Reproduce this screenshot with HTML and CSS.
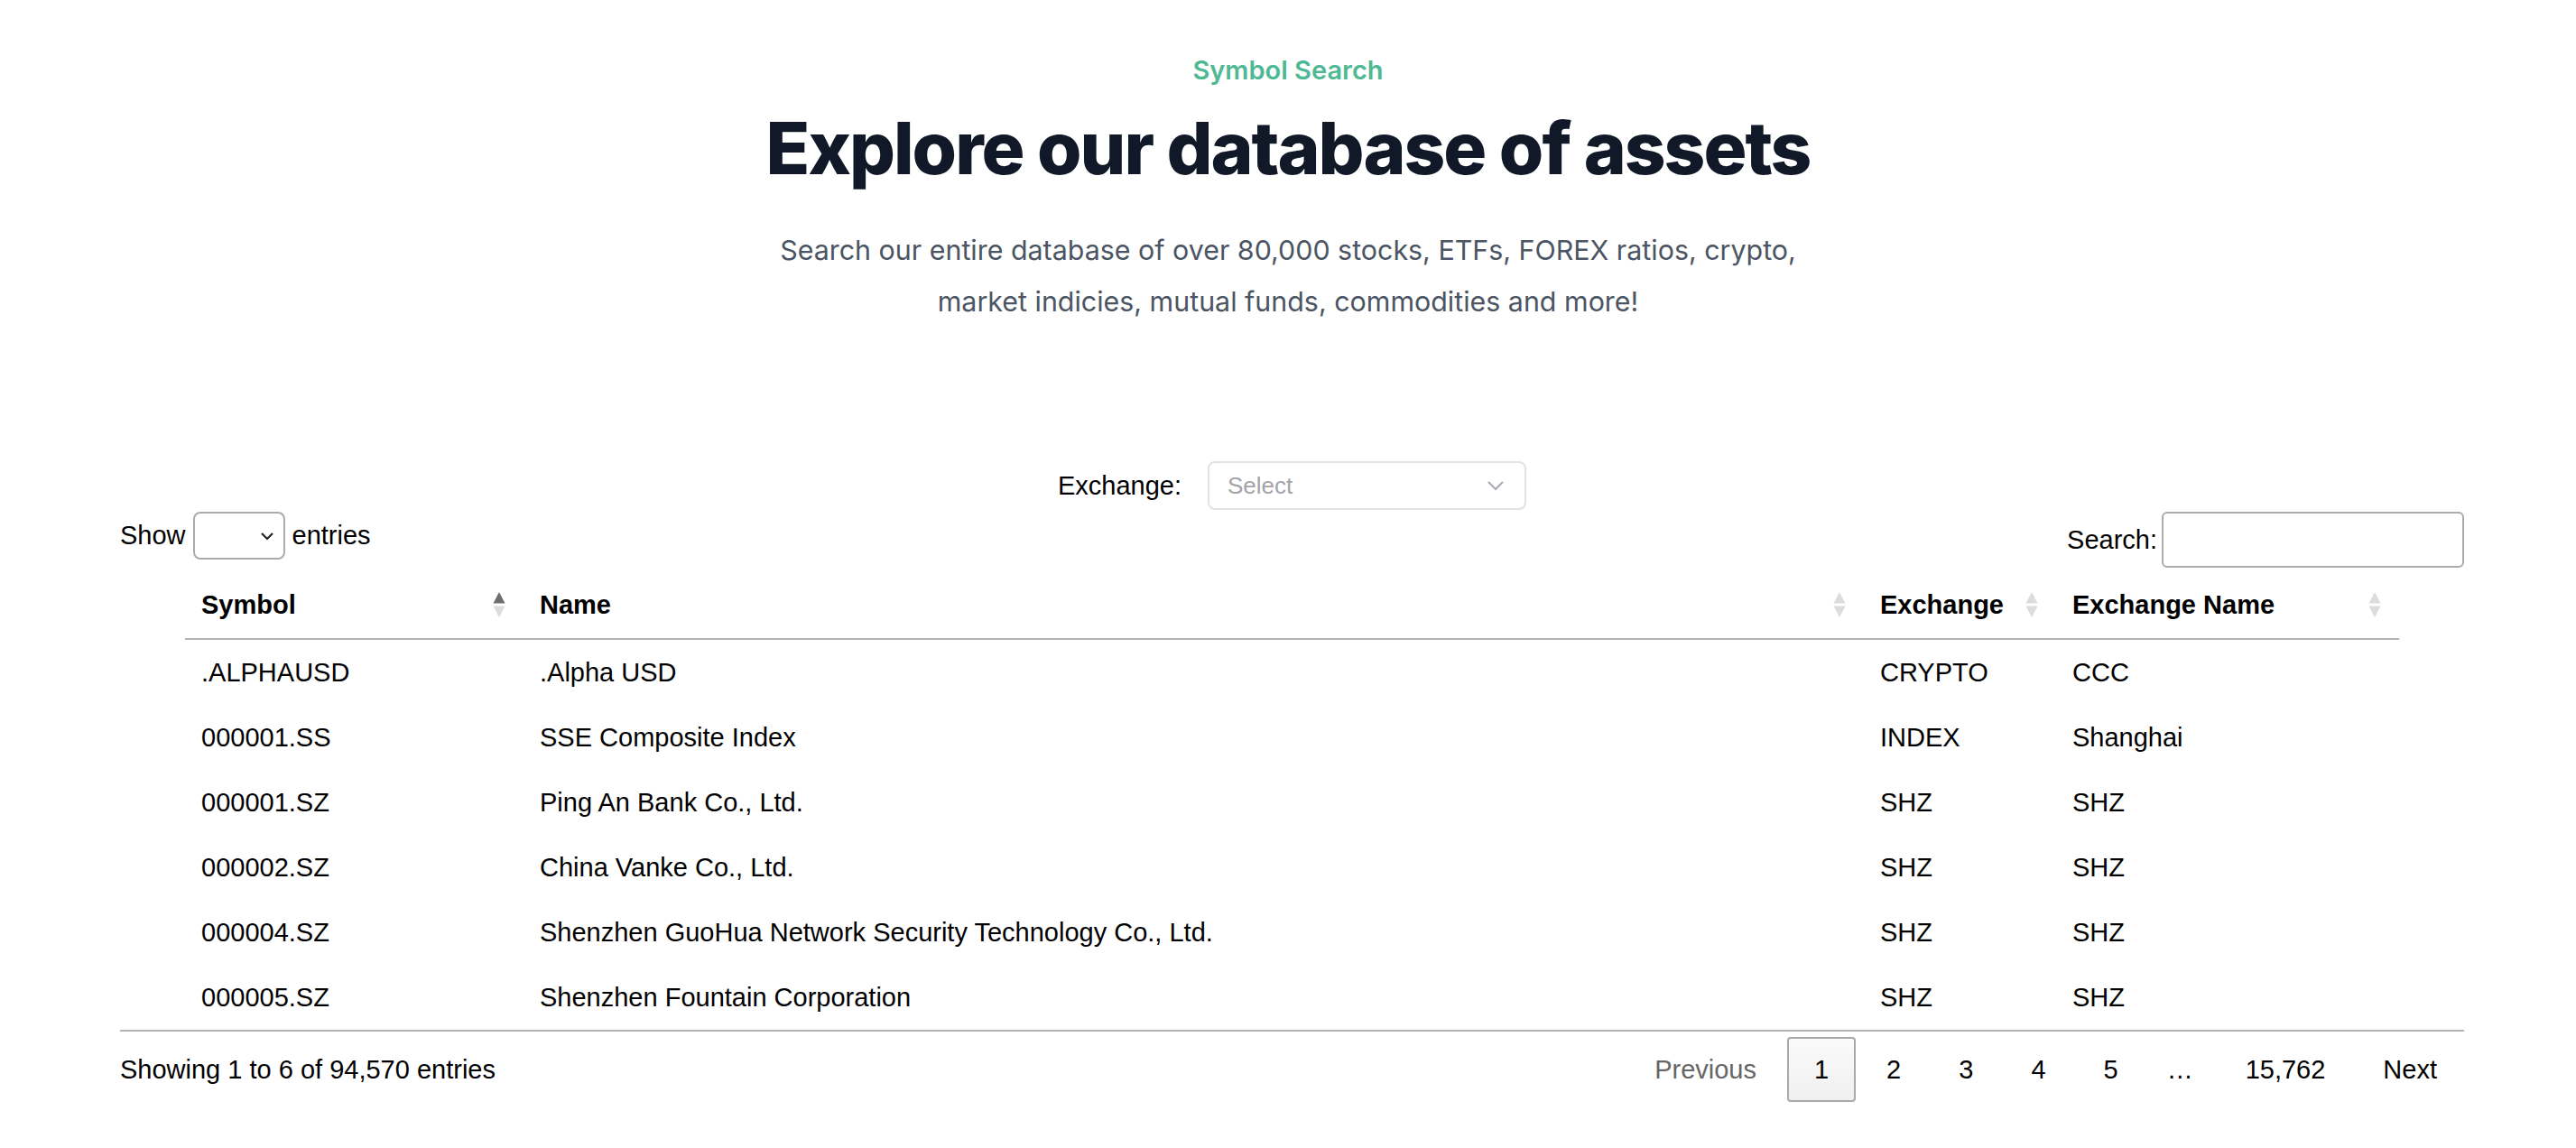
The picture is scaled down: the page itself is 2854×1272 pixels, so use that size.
FILE: index.html
```html
<!DOCTYPE html>
<html lang="en">
<head>
    <meta charset="UTF-8">
    <meta name="viewport" content="width=device-width, initial-scale=1.0">
    <title>Symbol Search</title>
    <link rel="stylesheet" href="styles.css">
</head>
<body>
    <header class="intro">
        <p class="eyebrow">Symbol Search</p>
        <h1>Explore our database of assets</h1>
        <p class="lead">Search our entire database of over 80,000 stocks, ETFs, FOREX ratios, crypto,<br>market indicies, mutual funds, commodities and more!</p>
    </header>

    <div class="wrapper">
        <div class="filter">
            <label class="filter-label">Exchange:</label>
            <div class="fake-select">
                <span>Select</span>
                <svg width="20" height="12" viewBox="0 0 20 12"><path d="M2 2 L10 10 L18 2" fill="none" stroke="#a9a9b0" stroke-width="2"/></svg>
            </div>
        </div>

        <div class="dt-top">
            <div class="length">
                <span>Show</span>
                <div class="length-select">
                    <svg width="16" height="10" viewBox="0 0 16 10"><path d="M2 2 L8 8 L14 2" fill="none" stroke="#222" stroke-width="2.2"/></svg>
                </div>
                <span>entries</span>
            </div>
            <div class="search">
                <label for="search">Search:</label>
                <input id="search" type="text" class="search-input">
            </div>
        </div>

        <table class="symbols">
            <colgroup>
                <col style="width: 375px">
                <col style="width: 1485px">
                <col style="width: 213px">
                <col style="width: 380px">
            </colgroup>
            <thead>
                <tr>
                    <th><div class="th-inner"><span>Symbol</span>
                        <svg class="sort" width="14" height="30" viewBox="0 0 14 30"><path d="M7 1 L13.5 13.5 H0.5 Z" fill="#6e6e6e"/><path d="M0.5 16.5 H13.5 L7 29 Z" fill="#dcdcdc"/></svg></div></th>
                    <th><div class="th-inner"><span>Name</span>
                        <svg class="sort" width="14" height="30" viewBox="0 0 14 30"><path d="M7 1 L13.5 13.5 H0.5 Z" fill="#dcdcdc"/><path d="M0.5 16.5 H13.5 L7 29 Z" fill="#dcdcdc"/></svg></div></th>
                    <th><div class="th-inner"><span>Exchange</span>
                        <svg class="sort" width="14" height="30" viewBox="0 0 14 30"><path d="M7 1 L13.5 13.5 H0.5 Z" fill="#dcdcdc"/><path d="M0.5 16.5 H13.5 L7 29 Z" fill="#dcdcdc"/></svg></div></th>
                    <th><div class="th-inner"><span>Exchange Name</span>
                        <svg class="sort" width="14" height="30" viewBox="0 0 14 30"><path d="M7 1 L13.5 13.5 H0.5 Z" fill="#dcdcdc"/><path d="M0.5 16.5 H13.5 L7 29 Z" fill="#dcdcdc"/></svg></div></th>
                </tr>
            </thead>
            <tbody>
                <tr><td>.ALPHAUSD</td><td>.Alpha USD</td><td>CRYPTO</td><td>CCC</td></tr>
                <tr><td>000001.SS</td><td>SSE Composite Index</td><td>INDEX</td><td>Shanghai</td></tr>
                <tr><td>000001.SZ</td><td>Ping An Bank Co., Ltd.</td><td>SHZ</td><td>SHZ</td></tr>
                <tr><td>000002.SZ</td><td>China Vanke Co., Ltd.</td><td>SHZ</td><td>SHZ</td></tr>
                <tr><td>000004.SZ</td><td>Shenzhen GuoHua Network Security Technology Co., Ltd.</td><td>SHZ</td><td>SHZ</td></tr>
                <tr><td>000005.SZ</td><td>Shenzhen Fountain Corporation</td><td>SHZ</td><td>SHZ</td></tr>
            </tbody>
        </table>

        <div class="dt-bottom">
            <div class="info">Showing 1 to 6 of 94,570 entries</div>
            <div class="paginate">
                <span class="page-btn disabled">Previous</span>
                <span class="page-btn current">1</span>
                <span class="page-btn">2</span>
                <span class="page-btn">3</span>
                <span class="page-btn">4</span>
                <span class="page-btn">5</span>
                <span class="ellipsis">…</span>
                <span class="page-btn">15,762</span>
                <span class="page-btn">Next</span>
            </div>
        </div>
    </div>
</body>
</html>
```

FILE: styles.css
```css
body {
    margin: 0;
    background: #fff;
    color: #000;
    font-family: "Liberation Sans", Arial, sans-serif;
}
.intro {
    text-align: center;
    padding-top: 58px;
    font-family: Inter, "Liberation Sans", sans-serif;
}
.eyebrow {
    margin: 0;
    font-size: 29px;
    line-height: 40px;
    font-weight: 600;
    color: #4fb894;
}
.intro h1 {
    margin: 26px 0 0;
    font-size: 80px;
    line-height: 80px;
    font-weight: 800;
    letter-spacing: -2px;
    color: #111827;
}
.lead {
    margin: 45px 0 0;
    font-size: 30.4px;
    line-height: 57px;
    color: #4b5563;
}
.wrapper {
    width: 2597px;
    margin: 148px 0 0 133px;
}
.filter {
    display: flex;
    justify-content: center;
    align-items: center;
    gap: 29px;
    height: 54px;
}
.filter-label {
    font-size: 29px;
}
.fake-select {
    width: 353px;
    height: 54px;
    box-sizing: border-box;
    border: 2px solid #e1e1e6;
    border-radius: 8px;
    display: flex;
    align-items: center;
    justify-content: space-between;
    padding: 0 22px 0 20px;
    font-size: 26px;
    color: #a3a3a9;
}
.dt-top {
    display: flex;
    justify-content: space-between;
    align-items: flex-start;
    margin-top: 2px;
    height: 66px;
    font-size: 29px;
}
.length {
    display: flex;
    align-items: center;
    gap: 8px;
    height: 53px;
}
.length-select {
    width: 102px;
    height: 53px;
    box-sizing: border-box;
    border: 2px solid #ababab;
    border-radius: 8px;
    display: flex;
    align-items: center;
    justify-content: flex-end;
    padding-right: 10px;
}
.search {
    display: flex;
    align-items: center;
    height: 62px;
}
.search-input {
    width: 335px;
    height: 62px;
    margin: 0 0 0 5px;
    box-sizing: border-box;
    border: 2px solid #ababab;
    border-radius: 6px;
    background: #fff;
    outline: none;
}
.symbols {
    width: 2453px;
    margin: 0 auto;
    border-collapse: collapse;
    table-layout: fixed;
    font-size: 29px;
}
.symbols th {
    text-align: left;
    font-weight: bold;
    padding: 20px 20px 20px 18px;
    line-height: 34px;
    border-bottom: 2px solid #b3b3b3;
}
.th-inner {
    display: flex;
    justify-content: space-between;
    align-items: center;
}
.symbols td {
    padding: 16px 18px;
    line-height: 40px;
    white-space: nowrap;
}
.dt-bottom {
    display: flex;
    justify-content: space-between;
    align-items: center;
    border-top: 2px solid #b3b3b3;
    padding-top: 6px;
    font-size: 29px;
}
.paginate {
    display: flex;
    align-items: center;
}
.page-btn {
    padding: 14px 28px;
    line-height: 40px;
    margin-left: 4px;
    border: 2px solid transparent;
    border-radius: 4px;
}
.page-btn.current {
    border-color: #a9a9a9;
    background: linear-gradient(to bottom, #fbfbfb 0%, #efefef 100%);
}
.page-btn.disabled {
    color: #666;
}
.ellipsis {
    padding: 0 24px;
}
```
